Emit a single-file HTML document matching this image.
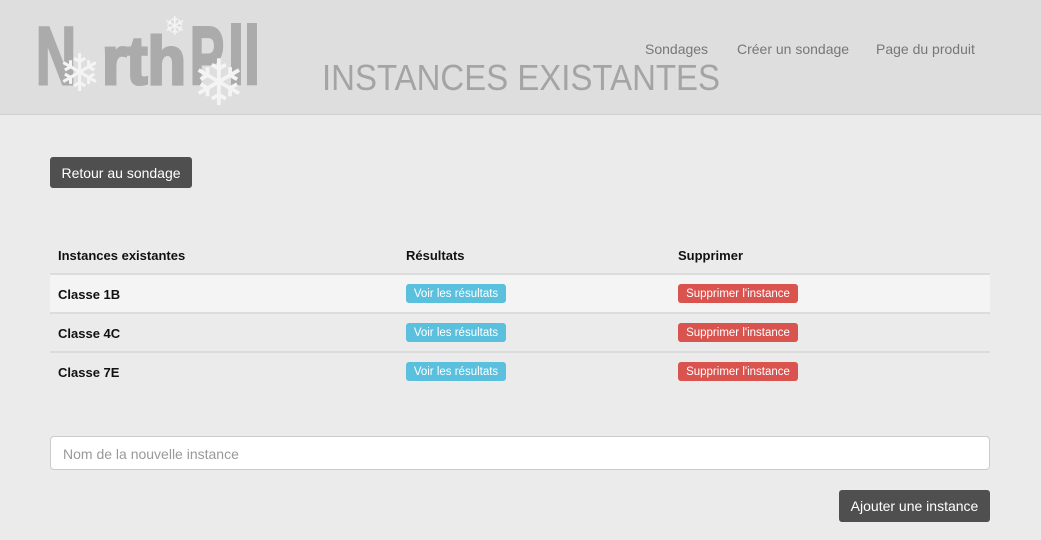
<!DOCTYPE html>
<html><head><meta charset="utf-8"><style>
*{box-sizing:border-box;margin:0;padding:0}
body{width:1041px;height:540px;overflow:hidden;background:#ebebeb;font-family:"Liberation Sans",sans-serif;position:relative}
.hdr{position:absolute;left:0;top:0;width:1041px;height:115px;background:#dedede;border-bottom:1px solid #cfcfcf}
.nav{position:absolute;top:41px;font-size:14px;color:#777}
.btn{position:absolute;background:#4f4f4f;color:#fff;border-radius:3px;font-size:14px;text-align:center}
.th{position:absolute;top:248px;font-size:13px;font-weight:bold;color:#111}
.row{position:absolute;left:50px;width:940px;height:39px;border-top:2px solid #dcdcdc}
.cl{position:absolute;left:8px;top:12px;font-size:13px;font-weight:bold;color:#111}
.b1{position:absolute;left:356px;top:9px;width:100px;height:19px;background:#5bc0de;color:#fff;font-size:11.5px;line-height:21px;text-align:center;border-radius:3px}
.b2{position:absolute;left:628px;top:9px;width:120px;height:19px;background:#d9534f;color:#fff;font-size:11.5px;line-height:21px;text-align:center;border-radius:3px}
</style></head><body>
<div class="hdr"></div>
<svg style="position:absolute;left:30px;top:5px" width="240" height="105">
<g fill="#ababab" stroke="#ababab" stroke-width="3" font-family="Liberation Sans,sans-serif" font-weight="bold">
<text x="6" y="79" font-size="82" textLength="40" lengthAdjust="spacingAndGlyphs">N</text>
<text x="72" y="79" font-size="68" textLength="84" lengthAdjust="spacingAndGlyphs">rth</text>
<text x="160" y="79" font-size="82" textLength="34" lengthAdjust="spacingAndGlyphs">P</text>
<text x="198" y="79" font-size="82" textLength="32" lengthAdjust="spacingAndGlyphs">ll</text>
</g>
<g fill="#f4f4f4" font-family="DejaVu Sans,sans-serif">
<text x="28" y="86" font-size="52">❄</text>
<text x="162" y="100" font-size="64">❄</text>
<text x="134" y="30" font-size="26">❄</text>
</g>
</svg>
<svg style="position:absolute;left:320px;top:56px" width="410" height="42"><text x="2" y="34" font-size="36" font-family="Liberation Sans,sans-serif" fill="#a4a4a4" textLength="398" lengthAdjust="spacingAndGlyphs">INSTANCES EXISTANTES</text></svg>
<div class="nav" style="left:645px">Sondages</div>
<div class="nav" style="left:737px">Créer un sondage</div>
<div class="nav" style="left:876px">Page du produit</div>
<div class="btn" style="left:50px;top:157px;width:142px;height:31px;line-height:32px">Retour au sondage</div>
<div class="th" style="left:58px">Instances existantes</div>
<div class="th" style="left:406px">Résultats</div>
<div class="th" style="left:678px">Supprimer</div>
<div class="row" style="top:273px;background:#f4f4f4"><div class="cl">Classe 1B</div><div class="b1">Voir les résultats</div><div class="b2">Supprimer l'instance</div></div>
<div class="row" style="top:312px"><div class="cl">Classe 4C</div><div class="b1">Voir les résultats</div><div class="b2">Supprimer l'instance</div></div>
<div class="row" style="top:351px"><div class="cl">Classe 7E</div><div class="b1">Voir les résultats</div><div class="b2">Supprimer l'instance</div></div>
<div style="position:absolute;left:50px;top:436px;width:940px;height:34px;background:#fff;border:1px solid #ccc;border-radius:4px;font-size:14px;color:#999;padding:9px 12px">Nom de la nouvelle instance</div>
<div class="btn" style="left:839px;top:490px;width:151px;height:32px;line-height:32px">Ajouter une instance</div>
</body></html>
